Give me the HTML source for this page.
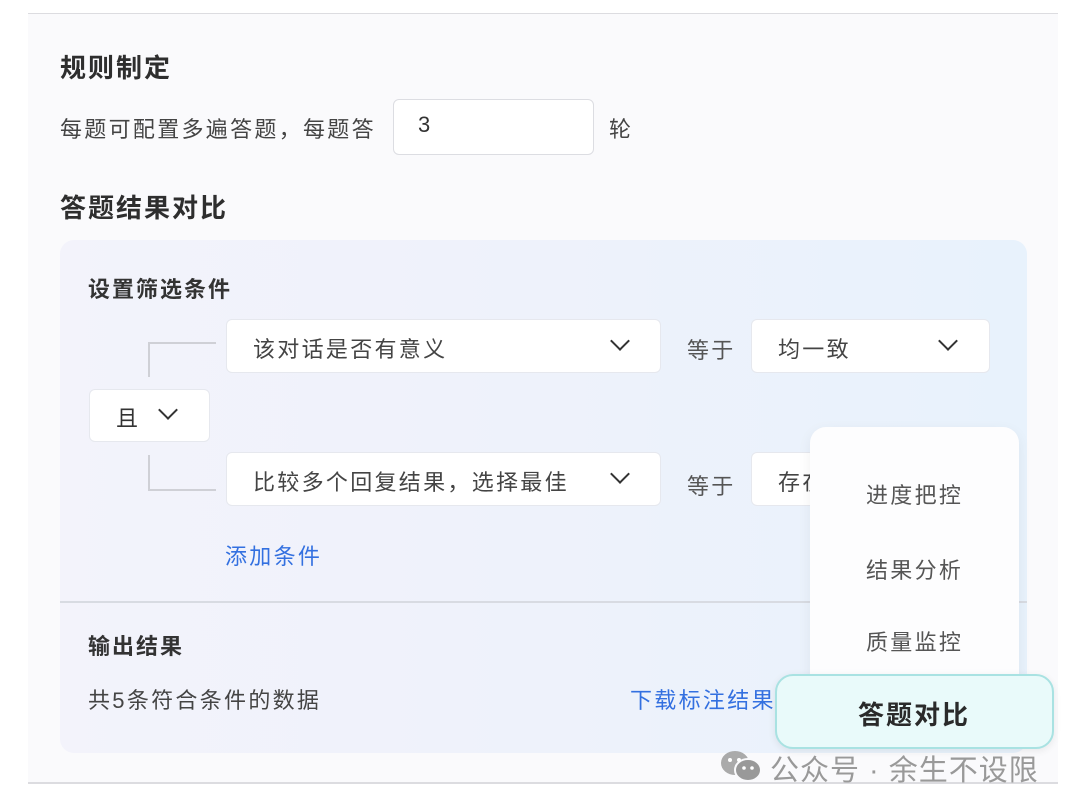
<!DOCTYPE html>
<html><head><meta charset="utf-8"><style>
*{margin:0;padding:0;box-sizing:border-box}
body{width:1080px;height:810px;background:#fff;font-family:"Liberation Sans","Noto Sans CJK SC",sans-serif;color:#333;position:relative;overflow:hidden}
.a{position:absolute;white-space:nowrap}
.card{left:28px;top:13px;width:1030px;height:771px;background:#fafafc;border-top:1px solid #dcdce0;border-bottom:2px solid #dcdce0}
.h{font-size:26px;letter-spacing:2px;font-weight:bold;color:#2e2e2e}
.t{font-size:22px;letter-spacing:2.3px;color:#444}
.box{background:#fff;border:1px solid #e6e8ee;border-radius:6px}
.panel{left:60px;top:240px;width:967px;height:513px;border-radius:14px;background:linear-gradient(90deg,#f3f3fb 0%,#eef2fb 50%,#e8f2fc 100%)}
.chev{position:absolute;width:14px;height:14px;border-right:2px solid #333;border-bottom:2px solid #333;transform:rotate(45deg)}
.ln{border-color:#cfd0d6;border-style:solid;border-width:0}
.pop{left:810px;top:427px;width:209px;height:290px;background:#fdfdfe;border-radius:16px;box-shadow:0 4px 14px rgba(0,0,0,.06)}
.pi{font-size:22px;letter-spacing:2.3px;color:#555;left:866px}
</style></head><body>
<div class="a card"></div>
<div class="a h" style="left:60px;top:48px">规则制定</div>
<div class="a t" style="left:60px;top:112px">每题可配置多遍答题，每题答</div>
<div class="a box" style="left:393px;top:99px;width:201px;height:56px;border-color:#dcdde2"></div>
<div class="a t" style="left:418px;top:112px;color:#333">3</div>
<div class="a t" style="left:609px;top:112px">轮</div>
<div class="a h" style="left:60px;top:188px">答题结果对比</div>
<div class="a panel"></div>
<div class="a" style="left:88px;top:272px;font-size:22px;letter-spacing:2px;font-weight:bold;color:#333">设置筛选条件</div>
<div class="a ln" style="left:148px;top:342px;width:68px;height:35px;border-top-width:2px;border-left-width:2px"></div>
<div class="a ln" style="left:148px;top:455px;width:68px;height:36px;border-bottom-width:2px;border-left-width:2px"></div>
<div class="a box" style="left:89px;top:389px;width:121px;height:53px"></div>
<div class="a t" style="left:116px;top:401px;color:#333">且</div>
<div class="chev" style="left:161px;top:403px"></div>
<div class="a box" style="left:226px;top:319px;width:435px;height:54px"></div>
<div class="a t" style="left:253px;top:332px;color:#444">该对话是否有意义</div>
<div class="chev" style="left:613px;top:334px"></div>
<div class="a t" style="left:687px;top:333px;color:#555">等于</div>
<div class="a box" style="left:751px;top:319px;width:239px;height:54px"></div>
<div class="a t" style="left:778px;top:332px;color:#444">均一致</div>
<div class="chev" style="left:941px;top:334px"></div>
<div class="a box" style="left:226px;top:452px;width:435px;height:54px"></div>
<div class="a t" style="left:253px;top:465px;color:#444">比较多个回复结果，选择最佳</div>
<div class="chev" style="left:613px;top:467px"></div>
<div class="a t" style="left:687px;top:469px;color:#555">等于</div>
<div class="a box" style="left:751px;top:452px;width:120px;height:54px"></div>
<div class="a t" style="left:778px;top:465px;color:#444">存在</div>
<div class="a t" style="left:225px;top:539px;color:#3370e0">添加条件</div>
<div class="a" style="left:60px;top:601px;width:967px;height:2px;background:#d8dbe2"></div>
<div class="a" style="left:88px;top:629px;font-size:22px;letter-spacing:2px;font-weight:bold;color:#333">输出结果</div>
<div class="a t" style="left:88px;top:683px">共5条符合条件的数据</div>
<div class="a t" style="left:630px;top:683px;color:#3370e0">下载标注结果</div>
<div class="a pop"></div>
<div class="a pi" style="top:478px">进度把控</div>
<div class="a pi" style="top:553px">结果分析</div>
<div class="a pi" style="top:625px">质量监控</div>
<div class="a" style="left:775px;top:674px;width:279px;height:75px;background:#e9fafa;border:2px solid #a9e2e2;border-radius:18px;box-shadow:0 2px 8px rgba(0,0,0,.08)"></div>
<div class="a" style="left:858px;top:695px;font-size:26px;letter-spacing:2px;font-weight:bold;color:#2a2a2a">答题对比</div>
<svg class="a" style="left:718px;top:748px" width="46" height="34" viewBox="0 0 46 34"><ellipse cx="17" cy="15" rx="14" ry="12" fill="#aaa"/><ellipse cx="30" cy="22" rx="13" ry="11" fill="#999" stroke="#fafafc" stroke-width="2"/><circle cx="12" cy="12" r="2" fill="#fff"/><circle cx="21" cy="12" r="2" fill="#fff"/><circle cx="26" cy="20" r="1.8" fill="#fff"/><circle cx="34" cy="20" r="1.8" fill="#fff"/></svg>
<div class="a" style="left:770px;top:747px;font-size:29px;letter-spacing:1px;color:#999">公众号 · 余生不设限</div>
</body></html>
